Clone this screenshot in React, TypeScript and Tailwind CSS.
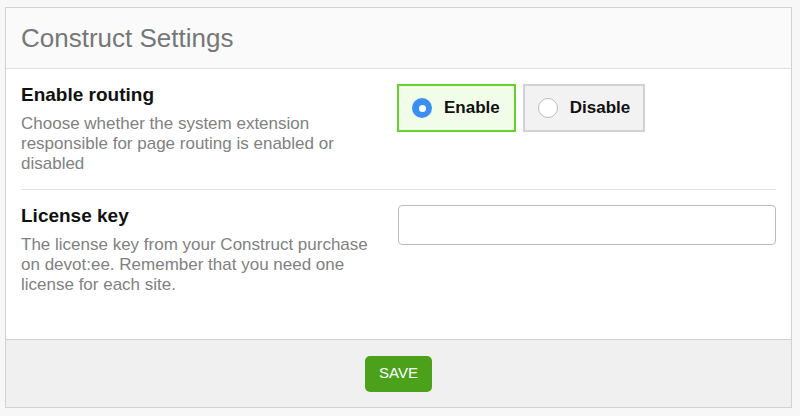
const App = () => {
  return (
    <div className="min-h-screen bg-[#f7f7f7] pt-[7px] pl-[5px] font-['Liberation_Sans',Arial,sans-serif]">
      <div className="w-[787px] border border-[#d2d2d2] bg-white">
        {/* header */}
        <div className="h-[61px] flex items-center px-[15px] bg-[#fafafa] border-b border-[#dedede]">
          <h1 className="text-[26px] text-[#777777] leading-none">Construct Settings</h1>
        </div>

        {/* settings */}
        <div className="px-[15px]">
          <div className="grid grid-cols-[377px_1fr] pt-[15px] pb-[15px] border-b border-[#e2e2e2]">
            <div className="pr-[15px]">
              <h2 className="text-[19px] leading-[22px] font-bold text-[#111111]">Enable routing</h2>
              <p className="mt-[8px] text-[17px] leading-[20px] text-[#818181]">
                Choose whether the system extension responsible for page routing is enabled or disabled
              </p>
            </div>
            <div className="flex items-start gap-[7px] -ml-[1px]">
              <label className="h-[48px] flex items-center pl-[13px] pr-[14px] border-2 border-[#62d42c] bg-[#f1fde9] cursor-pointer">
                <span className="w-[20px] h-[20px] rounded-full bg-[#3a8ff3] flex items-center justify-center">
                  <span className="w-[7px] h-[7px] rounded-full bg-white" />
                </span>
                <span className="ml-[12px] text-[17px] font-bold text-[#111111]">Enable</span>
              </label>
              <label className="h-[48px] flex items-center pl-[13px] pr-[13px] border-2 border-[#d0d0d0] bg-[#f2f2f2] cursor-pointer">
                <span className="w-[20px] h-[20px] rounded-full bg-white border border-[#bdbdbd]" />
                <span className="ml-[12px] text-[17px] font-bold text-[#111111]">Disable</span>
              </label>
            </div>
          </div>

          <div className="grid grid-cols-[377px_1fr] pt-[15px] pb-[44px]">
            <div className="pr-[15px]">
              <h2 className="text-[19px] leading-[22px] font-bold text-[#111111]">License key</h2>
              <p className="mt-[8px] text-[17px] leading-[20px] text-[#818181]">
                The license key from your Construct purchase on devot:ee. Remember that you need one license for each site.
              </p>
            </div>
            <div>
              <input
                type="text"
                className="w-full h-[40px] rounded-[4px] border border-[#bcbcbc] bg-white px-2 outline-none"
              />
            </div>
          </div>
        </div>

        {/* footer */}
        <div className="h-[68px] flex items-center justify-center bg-[#f0f0f0] border-t border-[#cfcfcf]">
          <button className="w-[67px] h-[36px] rounded-[5px] bg-[#4ca11b] text-white text-[15px] uppercase">
            Save
          </button>
        </div>
      </div>
    </div>
  );
};

export default App;
